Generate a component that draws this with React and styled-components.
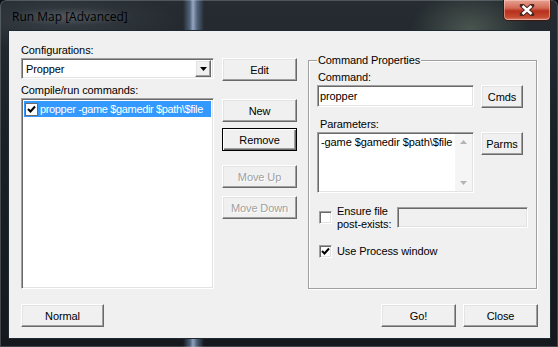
import React from 'react';
import styled, {createGlobalStyle} from 'styled-components';

const Global = createGlobalStyle`
  html, body {
    margin: 0;
    padding: 0;
    background: #0d1014;
    overflow: hidden;
  }
  * {
    box-sizing: border-box;
  }
`;

const Frame = styled.div`
  width: 558px;
  height: 347px;
  display: flex;
  flex-direction: column;
  border-radius: 6px 6px 0 0;
  background:
    radial-gradient(ellipse 60px 40px at 470px 30px, rgba(120, 140, 120, 0.45), transparent),
    radial-gradient(ellipse 120px 30px at 60px 20px, rgba(90, 100, 110, 0.35), transparent),
    linear-gradient(90deg, transparent 0, transparent 183px, rgba(120, 150, 190, 0.55) 190px, rgba(200, 220, 255, 0.7) 193px, rgba(120, 150, 190, 0.55) 197px, transparent 204px),
    linear-gradient(180deg, #262c31 0, #1b2025 40%, #15191d 100%);
  box-shadow: inset 0 0 0 1px rgba(200, 210, 220, 0.25);
  font-family: "Liberation Sans", Arial, sans-serif;
  font-size: 11px;
  letter-spacing: -0.1px;
  color: #000;
`;

const TitleBar = styled.div`
  height: 31px;
  display: flex;
  justify-content: space-between;
  align-items: flex-start;
  padding-left: 10px;
`;

const Title = styled.div`
  margin-top: 8px;
  padding: 0 2px;
  line-height: 17px;
  font-family: "Open Sans", "Noto Sans", sans-serif;
  font-size: 12px;
  letter-spacing: 0;
  color: #000;
  border-radius: 8px;
  background: radial-gradient(ellipse at center, rgba(120, 130, 135, 0.4), transparent 75%);
`;

const CloseButton = styled.div`
  width: 48px;
  height: 21px;
  margin-right: 7px;
  display: flex;
  align-items: center;
  justify-content: center;
  border: 1px solid #3a1712;
  border-top: none;
  border-radius: 0 0 5px 5px;
  background: linear-gradient(180deg, #e8a294 0, #d46a55 40%, #b8301c 55%, #c44a30 85%, #d9826c 100%);
  box-shadow: inset 0 0 0 1px rgba(255, 220, 210, 0.45);
`;

const Client = styled.div`
  width: 541px;
  height: 307px;
  margin-left: 9px;
  background: #f0f0f0;
  box-shadow: 0 0 0 1px #1e2a33;
  display: flex;
  flex-direction: column;
`;

const Main = styled.div`
  display: flex;
  align-items: flex-start;
  padding: 13px 0 0 12px;
`;

const LeftCol = styled.div`
  width: 193px;
  display: flex;
  flex-direction: column;
`;

const Label = styled.div`
  line-height: 13px;
  height: 13px;
  white-space: nowrap;
  margin-top: ${p => p.$mt || 0}px;
  margin-bottom: 1px;
  padding-left: ${p => p.$pl || 0}px;
`;

const sunken = `
  border-style: solid;
  border-width: 1px;
  border-color: #a0a0a0 #fff #fff #a0a0a0;
  box-shadow: inset 1px 1px 0 #696969, inset -1px -1px 0 #e3e3e3;
`;

const Combo = styled.div`
  ${sunken}
  height: 21px;
  background: #fff;
  display: flex;
  align-items: center;
  justify-content: space-between;
  padding: 0 2px 0 4px;
`;

const raised = `
  border-style: solid;
  border-width: 1px;
  border-color: #fff #696969 #696969 #fff;
  box-shadow: inset -1px -1px 0 #a0a0a0, inset 1px 1px 0 #e3e3e3;
  background: #f0f0f0;
`;

const DropButton = styled.div`
  ${raised}
  width: 16px;
  height: 17px;
  display: flex;
  align-items: center;
  justify-content: center;
`;

const ListBox = styled.div`
  ${sunken}
  height: 191px;
  background: #fff;
  padding: 2px;
`;

const SelectedRow = styled.div`
  height: 16px;
  background: #3399ff;
  color: #fff;
  display: flex;
  align-items: center;
  gap: 2px;
  padding-left: 1px;
  white-space: nowrap;
  letter-spacing: -0.35px;
`;

const Box = styled.div`
  width: 13px;
  height: 13px;
  flex: none;
  background: #fff;
  display: flex;
  align-items: center;
  justify-content: center;
  ${p => p.$sunken ? sunken : 'border: 1px solid #6a6a6a;'}
  margin-left: ${p => p.$ml || 0}px;
`;

const MidCol = styled.div`
  width: 75px;
  margin-left: 8px;
  padding-top: 14px;
  display: flex;
  flex-direction: column;
`;

const Button = styled.div`
  ${raised}
  width: ${p => p.$w || 75}px;
  height: 23px;
  flex: none;
  display: flex;
  align-items: center;
  justify-content: center;
  margin-top: ${p => p.$mt || 0}px;
  color: ${p => p.$disabled ? '#a0a0a0' : '#000'};
  text-shadow: ${p => p.$disabled ? '1px 1px 0 #fff' : 'none'};
  ${p => p.$default && `
    border-color: #000;
    box-shadow: inset 1px 1px 0 #fff, inset -1px -1px 0 #696969, inset -2px -2px 0 #a0a0a0;
  `}
`;

const Group = styled.div`
  position: relative;
  width: 229px;
  height: 229px;
  margin: 16px 0 0 11px;
  border: 1px solid #a0a0a0;
  box-shadow: 1px 1px 0 #fff, inset 1px 1px 0 #fff;
  padding: 10px 0 0 8px;
  display: flex;
  flex-direction: column;
`;

const Legend = styled.span`
  position: absolute;
  top: -7px;
  left: 8px;
  padding: 0 1px;
  line-height: 13px;
  background: #f0f0f0;
  white-space: nowrap;
`;

const Row = styled.div`
  display: flex;
  align-items: ${p => p.$center ? 'center' : 'flex-start'};
  height: ${p => p.$h ? `${p.$h}px` : 'auto'};
  margin-top: ${p => p.$mt || 0}px;
`;

const TextBox = styled.div`
  ${sunken}
  width: ${p => p.$w || 157}px;
  height: ${p => p.$h || 22}px;
  margin-right: 7px;
  background: ${p => p.$disabled ? '#f0f0f0' : '#fff'};
  padding: 4px 2px 0;
  line-height: 13px;
  white-space: nowrap;
`;

const TextArea = styled.div`
  ${sunken}
  width: 157px;
  height: 61px;
  margin-right: 7px;
  background: #fff;
  display: flex;
  padding: 1px;
`;

const AreaText = styled.div`
  flex: 1;
  padding: 2px 0 0 2px;
  line-height: 13px;
  white-space: nowrap;
`;

const ScrollBar = styled.div`
  width: 17px;
  background: #f5f5f5;
  display: flex;
  flex-direction: column;
  justify-content: space-between;
  align-items: center;
  padding: 6px 0;
`;

const CheckText = styled.div`
  width: 60px;
  margin-left: 5px;
  line-height: 13px;
  white-space: nowrap;
`;

const Footer = styled.div`
  display: flex;
  gap: 7px;
  margin-top: 15px;
  padding: 0 12px;
`;

const Spacer = styled.div`
  flex: 1;
`;

const Check = () => (
  <svg width="9" height="9" viewBox="0 0 9 9">
    <path d="M1 4 L3.5 6.5 L8 1.5" fill="none" stroke="#000" strokeWidth="2" />
  </svg>
);

const Arrow = ({down = true, color = '#000', size = 7}) => (
  <svg width={size} height={Math.ceil(size / 2)} viewBox="0 0 7 4">
    <path d={down ? 'M0 0 H7 L3.5 4 Z' : 'M0 4 H7 L3.5 0 Z'} fill={color} />
  </svg>
);

export default function App() {
  return (
    <>
      <Global />
      <Frame>
        <TitleBar>
          <Title>Run Map [Advanced]</Title>
          <CloseButton>
            <svg width="16" height="12" viewBox="0 0 16 12">
              <path d="M3 1.5 L13 10.5 M13 1.5 L3 10.5" stroke="#4a2620" strokeWidth="4.5" strokeLinecap="round" />
              <path d="M3.5 2 L12.5 10 M12.5 2 L3.5 10" stroke="#fff" strokeWidth="2.4" />
            </svg>
          </CloseButton>
        </TitleBar>

        <Client>
          <Main>
            <LeftCol>
              <Label>Configurations:</Label>
              <Combo>
                <span>Propper</span>
                <DropButton><Arrow /></DropButton>
              </Combo>
              <Label $mt={5}>Compile/run commands:</Label>
              <ListBox>
                <SelectedRow>
                  <Box><Check /></Box>
                  propper -game $gamedir $path\$file
                </SelectedRow>
              </ListBox>
            </LeftCol>

            <MidCol>
              <Button>Edit</Button>
              <Button $mt={18}>New</Button>
              <Button $mt={6} $default>Remove</Button>
              <Button $mt={14} $disabled>Move Up</Button>
              <Button $mt={8} $disabled>Move Down</Button>
            </MidCol>

            <Group>
              <Legend>Command Properties</Legend>
              <Label $pl={1}>Command:</Label>
              <Row>
                <TextBox>propper</TextBox>
                <Button $w={42}>Cmds</Button>
              </Row>
              <Label $mt={10} $pl={3}>Parameters:</Label>
              <Row>
                <TextArea>
                  <AreaText>-game $gamedir $path\$file</AreaText>
                  <ScrollBar>
                    <Arrow down={false} color="#b4b4b4" />
                    <Arrow color="#b4b4b4" />
                  </ScrollBar>
                </TextArea>
                <Button $w={42}>Parms</Button>
              </Row>
              <Row $center $h={21} $mt={14}>
                <Box $sunken $ml={2} />
                <CheckText>Ensure file<br />post-exists:</CheckText>
                <TextBox $w={131} $h={21} $disabled />
              </Row>
              <Row $center $h={13} $mt={17}>
                <Box $sunken $ml={2}><Check /></Box>
                <CheckText>Use Process window</CheckText>
              </Row>
            </Group>
          </Main>

          <Footer>
            <Button $w={83}>Normal</Button>
            <Spacer />
            <Button>Go!</Button>
            <Button>Close</Button>
          </Footer>
        </Client>
      </Frame>
    </>
  );
}
